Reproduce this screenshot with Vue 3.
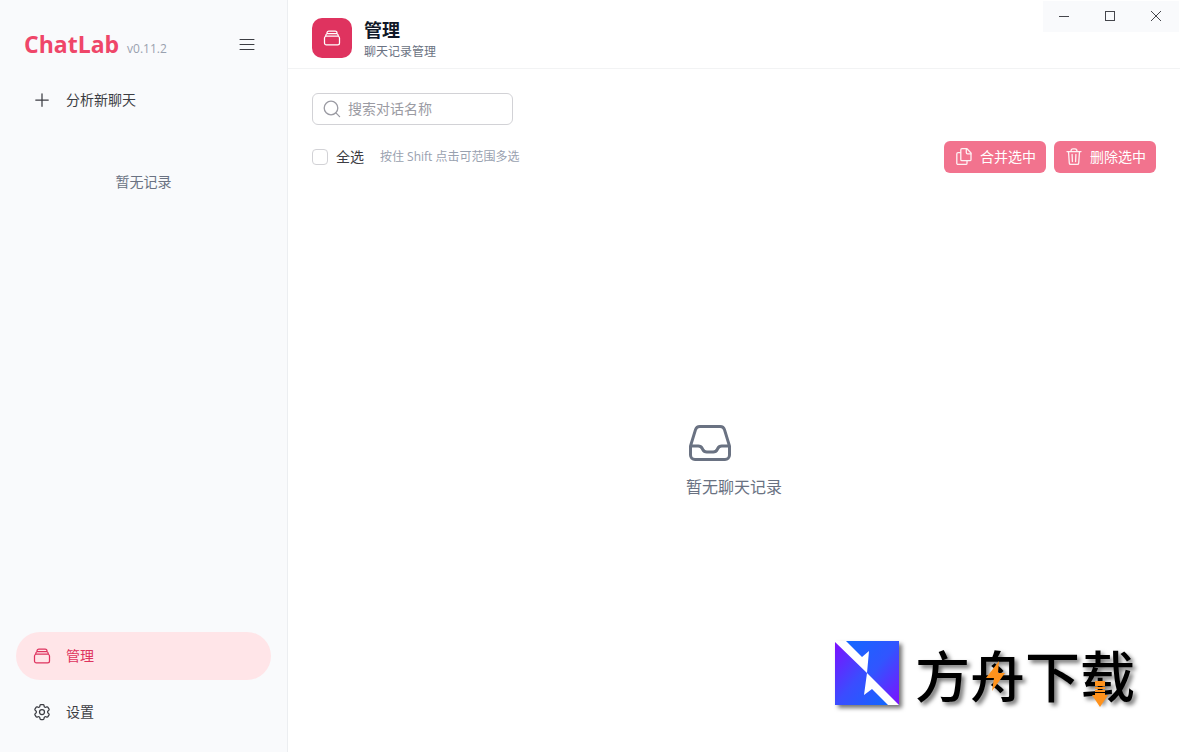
<script setup>
import { ref } from 'vue'

const keyword = ref('')
const allSelected = ref(false)
</script>

<template>
  <div class="app">
    <aside class="sidebar">
      <header class="brand">
        <h1 class="brand-name">ChatLab</h1>
        <span class="version">v0.11.2</span>
        <button class="toggle" type="button" aria-label="菜单">
          <svg width="20" height="20" viewBox="0 0 20 20" class="line"><path d="M3 5.500h14M3 10.500h14M3 15.500h14" /></svg>
        </button>
      </header>
      <button class="nav-item" type="button">
        <svg width="20" height="20" viewBox="0 0 24 24" class="line"><path d="M12 4.500v15M4.500 12h15" /></svg>
        <span>分析新聊天</span>
      </button>
      <p class="no-records">暂无记录</p>
      <nav class="bottom-nav">
        <button class="nav-item active" type="button">
          <svg width="20" height="20" viewBox="0 0 24 24" class="line"><path d="M6 6.878V6a2.25 2.25 0 0 1 2.25-2.25h7.5A2.25 2.25 0 0 1 18 6v.878m-12 0c.235-.083.487-.128.75-.128h10.5c.263 0 .515.045.75.128m-12 0A2.25 2.25 0 0 0 4.5 9v.878m13.5-3A2.25 2.25 0 0 1 19.5 9v.878m0 0a2.246 2.246 0 0 0-.75-.128H5.25c-.263 0-.515.045-.75.128m15 0A2.25 2.25 0 0 1 21 12v6a2.25 2.25 0 0 1-2.25 2.25H5.25A2.25 2.25 0 0 1 3 18v-6c0-.98.626-1.813 1.5-2.122" /></svg>
          <span>管理</span>
        </button>
        <button class="nav-item" type="button">
          <svg width="20" height="20" viewBox="0 0 24 24" class="line">
            <path d="M9.594 3.94c.09-.542.56-.94 1.11-.94h2.593c.55 0 1.02.398 1.11.94l.213 1.281c.063.374.313.686.645.87.074.04.147.083.22.127.325.196.72.257 1.075.124l1.217-.456a1.125 1.125 0 0 1 1.37.49l1.296 2.247a1.125 1.125 0 0 1-.26 1.431l-1.003.827c-.293.241-.438.613-.43.992a7.723 7.723 0 0 1 0 .255c-.008.378.137.75.43.991l1.004.827c.424.35.534.955.26 1.43l-1.298 2.247a1.125 1.125 0 0 1-1.369.491l-1.217-.456c-.355-.133-.75-.072-1.076.124a6.47 6.47 0 0 1-.22.128c-.331.183-.581.495-.644.869l-.213 1.281c-.09.543-.56.94-1.11.94h-2.594c-.55 0-1.019-.398-1.11-.94l-.213-1.281c-.062-.374-.312-.686-.644-.87a6.52 6.52 0 0 1-.22-.127c-.325-.196-.72-.257-1.076-.124l-1.217.456a1.125 1.125 0 0 1-1.369-.49l-1.297-2.247a1.125 1.125 0 0 1 .26-1.431l1.004-.827c.292-.24.437-.613.43-.991a6.932 6.932 0 0 1 0-.255c.007-.38-.138-.751-.43-.992l-1.004-.827a1.125 1.125 0 0 1-.26-1.43l1.297-2.247a1.125 1.125 0 0 1 1.37-.491l1.216.456c.356.133.751.072 1.076-.124.072-.044.146-.086.22-.128.332-.183.582-.495.644-.869l.214-1.28Z" />
            <circle cx="12" cy="12" r="3" />
          </svg>
          <span>设置</span>
        </button>
      </nav>
    </aside>

    <main class="main">
      <header class="page-header">
        <div class="page-icon">
          <svg width="20" height="20" viewBox="0 0 24 24" class="line"><path d="M6 6.878V6a2.25 2.25 0 0 1 2.25-2.25h7.5A2.25 2.25 0 0 1 18 6v.878m-12 0c.235-.083.487-.128.75-.128h10.5c.263 0 .515.045.75.128m-12 0A2.25 2.25 0 0 0 4.5 9v.878m13.5-3A2.25 2.25 0 0 1 19.5 9v.878m0 0a2.246 2.246 0 0 0-.75-.128H5.25c-.263 0-.515.045-.75.128m15 0A2.25 2.25 0 0 1 21 12v6a2.25 2.25 0 0 1-2.25 2.25H5.25A2.25 2.25 0 0 1 3 18v-6c0-.98.626-1.813 1.5-2.122" /></svg>
        </div>
        <div class="page-titles">
          <h2>管理</h2>
          <p>聊天记录管理</p>
        </div>
        <div class="window-controls">
          <button type="button" aria-label="最小化"><svg width="10" height="10" viewBox="0 0 10 10" class="pixel"><path d="M0 5.5h10" /></svg></button>
          <button type="button" aria-label="最大化"><svg width="10" height="10" viewBox="0 0 10 10" class="pixel"><path d="M.5.5h9v9h-9z" /></svg></button>
          <button type="button" aria-label="关闭"><svg width="10" height="10" viewBox="0 0 10 10" class="pixel diagonal"><path d="M0 0l10 10M10 0L0 10" /></svg></button>
        </div>
      </header>

      <section class="content">
        <label class="search">
          <svg width="20" height="20" viewBox="0 0 20 20" class="line"><circle cx="9" cy="9" r="6.8" /><path d="M13.9 13.9l3.700 3.700" /></svg>
          <input v-model="keyword" type="text" placeholder="搜索对话名称" aria-label="搜索对话名称" />
        </label>
        <div class="toolbar">
          <label class="select-all"><input v-model="allSelected" type="checkbox" /><span>全选</span></label>
          <span class="hint">按住 Shift 点击可范围多选</span>
          <div class="actions">
            <button class="action" type="button">
              <svg width="20" height="20" viewBox="0 0 20 20" class="line"><path d="M8 1.700h5L17 6v6.500a1.200 1.200 0 0 1-1.200 1.200H8a1.200 1.200 0 0 1-1.200-1.200V2.900A1.200 1.200 0 0 1 8 1.700z" /><path d="M12.300 2v3.600a1.200 1.200 0 0 0 1.200 1.200H17" /><path d="M6.500 5.700H4a1.200 1.200 0 0 0-1.200 1.200v9.300A1.200 1.200 0 0 0 4 17.400h7.800a1.200 1.200 0 0 0 1.200-1.200v-2.200" /></svg>
              <span>合并选中</span>
            </button>
            <button class="action" type="button">
              <svg width="20" height="20" viewBox="0 0 20 20" class="line"><path d="M3 4.600h14M7 4.400c0-1.700.800-2.600 2-2.600h2c1.200 0 2 .900 2 2.600M4.500 4.800l.800 11.300a1.400 1.400 0 0 0 1.400 1.300h6.600a1.400 1.400 0 0 0 1.400-1.300l.800-11.300M8.100 7.500l.300 7M11.900 7.500l-.300 7" /></svg>
              <span>删除选中</span>
            </button>
          </div>
        </div>
        <div class="empty">
          <div class="empty-body">
            <svg width="48" height="48" viewBox="0 0 24 24" class="line inbox"><path d="M2.250 13.500h3.860a2.250 2.250 0 0 1 2.012 1.244l.256.512a2.250 2.250 0 0 0 2.013 1.244h3.218a2.250 2.250 0 0 0 2.013-1.244l.256-.512a2.250 2.250 0 0 1 2.013-1.244h3.859m-19.500.338V18a2.250 2.250 0 0 0 2.250 2.250h15A2.250 2.250 0 0 0 21.750 18v-4.162c0-.224-.034-.447-.1-.661L19.240 5.338a2.250 2.250 0 0 0-2.150-1.588H6.911a2.250 2.250 0 0 0-2.150 1.588L2.350 13.177a2.250 2.250 0 0 0-.1.661Z" /></svg>
            <p>暂无聊天记录</p>
          </div>
        </div>
      </section>
    </main>

    <div class="watermark">
      <svg class="mark" width="64" height="64" viewBox="0 0 64 64">
        <defs>
          <linearGradient id="upper" x1="0" y1="0" x2="1" y2="1"><stop offset="0" stop-color="#1268ff" /><stop offset=".5" stop-color="#3155ff" /><stop offset="1" stop-color="#7d10ff" /></linearGradient>
          <linearGradient id="lower" x1="0" y1="0" x2="1" y2="1"><stop offset="0" stop-color="#7d10ff" /><stop offset=".5" stop-color="#3b4cff" /><stop offset="1" stop-color="#1268ff" /></linearGradient>
        </defs>
        <path fill="#fff" d="M0 0h64v64H0z" />
        <path fill="url(#upper)" d="M11 0H64V64L32 32L34 10L27 16Z" />
        <path fill="url(#lower)" d="M0 1L32 32L29 54L37 48L53 64H0Z" />
      </svg>
      <div class="wordmark">
        <span>方舟下载</span>
        <svg class="bolt" width="20" height="30" viewBox="0 0 20 30"><path fill="#ff921c" d="M13 0L0 17h8L6 30L19 12h-7z" /></svg>
        <svg class="down" width="16" height="26" viewBox="0 0 16 26"><path fill="#ff921c" d="M3 0h10v5H3zM3 6h10v2H3zM3 9h10v2H3zM3 12h10v2h3l-8 12L0 14h3z" /></svg>
      </div>
    </div>
  </div>
</template>

<style>
body { margin: 0; }
</style>

<style scoped>
.app {
  position: relative;
  display: flex;
  min-height: 100vh;
  background: #fff;
  color: #3c3d43;
  font: 14px/20px "Open Sans", "Noto Sans CJK SC", sans-serif;
}
.app * { box-sizing: border-box; }
h1, h2, p { margin: 0; }
button { border: 0; padding: 0; background: none; color: inherit; font: inherit; cursor: pointer; }
svg { display: block; flex: none; }
.line { fill: none; stroke: currentColor; stroke-width: 1.5; stroke-linecap: round; stroke-linejoin: round; }
.line.inbox { color: #6a7282; }

.sidebar {
  flex: none;
  display: flex;
  flex-direction: column;
  width: 288px;
  padding: 16px;
  border-right: 1px solid #eceef1;
  background: #f9fafc;
}
.brand { display: flex; align-items: baseline; height: 56px; padding: 0 8px; line-height: 56px; }
.brand-name { color: #ef4669; font-size: 23px; font-weight: 700; }
.version { margin-left: 8px; color: #99a1af; font-size: 12px; }
.toggle { align-self: center; margin-left: auto; padding: 6px; }
.toggle .line { stroke-width: 1; }
.nav-item {
  display: flex;
  align-items: center;
  gap: 14px;
  width: 100%;
  height: 48px;
  padding: 0 16px;
  border-radius: 24px;
}
.nav-item + .nav-item { margin-top: 8px; }
.nav-item.active { background: #ffe5e8; color: #de335e; }
.brand + .nav-item { margin-top: 4px; }
.no-records { margin-top: 48px; color: #6a7282; text-align: center; }
.bottom-nav { margin-top: auto; }

.main { flex: 1; display: flex; flex-direction: column; min-width: 0; }
.page-header {
  display: flex;
  align-items: flex-start;
  gap: 12px;
  height: 69px;
  padding-left: 24px;
  border-bottom: 1px solid #f2f3f4;
}
.page-icon {
  display: flex;
  align-items: center;
  justify-content: center;
  width: 40px;
  height: 40px;
  margin-top: 18px;
  border-radius: 10px;
  background: #df335f;
  color: #fff;
}
.page-titles { margin-top: 16px; }
.page-titles h2 { color: #101828; font-size: 18px; line-height: 28px; }
.page-titles p { color: #6a7282; font-size: 12px; line-height: 16px; }
.window-controls { display: flex; margin: 1px 1px 0 auto; background: #f9fafc; }
.window-controls button { display: flex; align-items: center; justify-content: center; width: 46px; height: 31px; padding-bottom: 1px; }
.window-controls button:first-child { width: 44px; padding-right: 2px; }
.pixel { fill: none; stroke: #45464c; shape-rendering: crispEdges; }
.pixel.diagonal { shape-rendering: auto; }

.content { flex: 1; display: flex; flex-direction: column; padding: 24px; }
.search {
  display: flex;
  align-items: center;
  gap: 6px;
  width: 201px;
  height: 32px;
  padding: 0 9px;
  border: 1px solid #d2d2d6;
  border-radius: 6px;
  color: #9b9ba3;
}
.search .line, .action .line { stroke-width: 1.3; }
.action .line { opacity: 0.9; }
.search input { flex: 1; min-width: 0; padding: 0; border: 0; outline: 0; background: none; color: #3c3d43; font: inherit; }
.search input::placeholder { color: #9b9ba3; opacity: 1; }
.toolbar { display: flex; align-items: center; margin-top: 16px; }
.select-all { display: flex; align-items: center; gap: 8px; }
.select-all input { appearance: none; width: 16px; height: 16px; margin: 0; border: 1px solid #d2d2d6; border-radius: 4px; background: #fff; }
.select-all input:checked { background: #df335f; }
.hint { margin-left: 16px; color: #99a1af; font-size: 12px; }
.actions { display: flex; gap: 8px; margin-left: auto; }
.action {
  display: flex;
  align-items: center;
  gap: 6px;
  height: 32px;
  padding: 0 10px;
  border-radius: 6px;
  background: #f2738e;
  color: #fff;
}
.empty { flex: 1; display: flex; align-items: center; justify-content: center; padding-top: 16px; }
.empty-body { color: #6a7282; font-size: 16px; line-height: 24px; }
.empty-body p { margin-top: 8px; }

.watermark { position: absolute; right: 45px; bottom: 43px; display: flex; align-items: center; gap: 16px; }
.mark { filter: drop-shadow(3px 3px 2px rgb(0 0 0 / 55%)); }
.wordmark {
  position: relative;
  color: #000;
  font: 500 55px/72px "Noto Sans CJK SC", sans-serif;
  text-shadow: 3px 3px 4px rgb(0 0 0 / 55%);
}
.bolt { position: absolute; left: 71px; top: 24px; }
.down { position: absolute; right: 27px; bottom: 2px; }
</style>
